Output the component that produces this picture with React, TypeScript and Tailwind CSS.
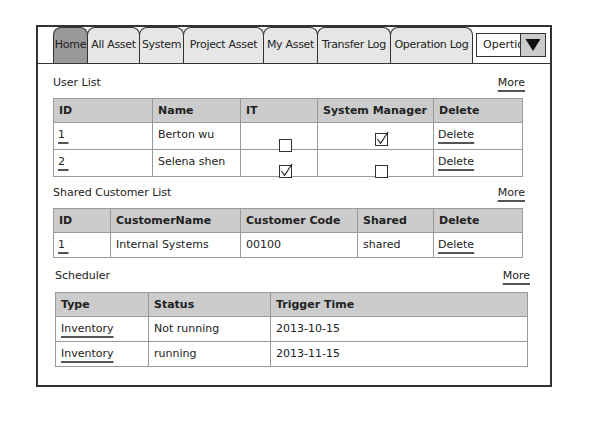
import React from "react";

const tabs = [
  { label: "Home", w: "w-[35px]", active: true },
  { label: "All Asset", w: "w-[53px]" },
  { label: "System", w: "w-[45px]" },
  { label: "Project Asset", w: "w-[81px]" },
  { label: "My Asset", w: "w-[55px]" },
  { label: "Transfer Log", w: "w-[74px]" },
  { label: "Operation Log", w: "w-[83px]" },
];

function Link({ children }: { children: React.ReactNode }) {
  return (
    <span className="underline decoration-[#555] decoration-[1.5px] underline-offset-[4px]">
      {children}
    </span>
  );
}

function Check({ checked }: { checked?: boolean }) {
  return (
    <svg width="15" height="15" viewBox="0 0 15 15" className="overflow-visible">
      <rect x="0.5" y="2.5" width="12" height="12" fill="white" stroke="#333" strokeWidth="1" />
      {checked && <path d="M2.5 8 L5.5 12.5 L13 1" fill="none" stroke="#222" strokeWidth="1.2" />}
    </svg>
  );
}

function SectionHead({ title, className = "" }: { title: string; className?: string }) {
  return (
    <div className={`flex items-center justify-between ${className}`}>
      <span>{title}</span>
      <span className="-mr-[2px]">
        <Link>More</Link>
      </span>
    </div>
  );
}

export default function App() {
  return (
    <div className="w-[613px] h-[443px] bg-white pt-[25px] pl-[36px] font-['DejaVu_Sans',sans-serif] text-[11px] text-[#222]">
      <div className="w-[516px] h-[362px] border-2 border-[#333] flex flex-col">
        {/* tab bar */}
        <div className="flex items-end h-[37px] border-b border-[#333] pl-[15px]">
          {tabs.map((t, i) => (
            <div
              key={t.label}
              className={`${t.w} h-[36px] border border-b-0 border-[#333] rounded-t-[8px] flex items-center justify-center whitespace-nowrap tracking-[-0.3px] ${
                t.active ? "bg-[#999999]" : "bg-[#e6e6e6]"
              } ${i > 0 ? "-ml-px" : ""}`}
            >
              {t.label}
            </div>
          ))}
          <div className="self-start mt-[6px] ml-[3px] w-[70px] h-[24px] border border-[#333] bg-white relative flex items-center pl-[6px] overflow-hidden">
            <span>Opertion</span>
            <div className="absolute right-0 top-0 h-full w-[25px] bg-[#cccccc] border-l border-[#333] flex items-center justify-center">
              <svg width="16" height="14" viewBox="0 0 16 14">
                <path d="M0.5 1 L15.5 1 L8 13 Z" fill="#111" />
              </svg>
            </div>
          </div>
        </div>

        <div className="pl-[15px] pr-[27px] flex flex-col">
          {/* User List */}
          <SectionHead title="User List" className="h-[34px] pt-[4px]" />
          <div className="border border-[#999] grid grid-cols-[99px_88px_77px_116px_1fr]">
            {["ID", "Name", "IT", "System Manager", "Delete"].map((h, i) => (
              <div
                key={h}
                className={`h-[24px] bg-[#cccccc] font-bold px-[5px] flex items-center pt-[1px] border-b border-[#999] ${i < 4 ? "border-r" : ""}`}
              >
                {h}
              </div>
            ))}
            {[
              { id: "1", name: "Berton wu", it: false, sm: true, itPad: "pt-[14px]", smPad: "pt-[8px]", h: "h-[27px] border-b" },
              { id: "2", name: "Selena shen", it: true, sm: false, itPad: "pt-[13px]", smPad: "pt-[13px]", h: "h-[26px]" },
            ].map((r) => (
              <React.Fragment key={r.id}>
                <div className={`${r.h} px-[4px] flex items-center pb-[2px] border-r border-[#999]`}>
                  <Link>{r.id}&nbsp;</Link>
                </div>
                <div className={`${r.h} px-[5px] flex items-center pb-[2px] border-r border-[#999]`}>
                  {r.name}
                </div>
                <div className={`${r.h} pl-[38px] ${r.itPad} border-r border-[#999]`}>
                  <Check checked={r.it} />
                </div>
                <div className={`${r.h} pl-[57px] ${r.smPad} border-r border-[#999]`}>
                  <Check checked={r.sm} />
                </div>
                <div className={`${r.h} px-[4px] flex items-center pb-[2px] border-[#999]`}>
                  <Link>Delete</Link>
                </div>
              </React.Fragment>
            ))}
          </div>

          {/* Shared Customer List */}
          <SectionHead title="Shared Customer List" className="h-[31px] pt-[2px]" />
          <div className="border border-[#999] grid grid-cols-[57px_130px_117px_76px_1fr]">
            {["ID", "CustomerName", "Customer Code", "Shared", "Delete"].map((h, i) => (
              <div
                key={h}
                className={`h-[24px] bg-[#cccccc] font-bold px-[5px] flex items-center pt-[1px] border-b border-[#999] ${i < 4 ? "border-r" : ""}`}
              >
                {h}
              </div>
            ))}
            <div className="h-[24px] px-[4px] flex items-center border-r border-[#999]">
              <Link>1&nbsp;</Link>
            </div>
            <div className="h-[24px] px-[5px] flex items-center border-r border-[#999]">Internal Systems</div>
            <div className="h-[24px] px-[5px] flex items-center border-r border-[#999]">00100</div>
            <div className="h-[24px] px-[5px] flex items-center border-r border-[#999]">shared</div>
            <div className="h-[24px] px-[4px] flex items-center">
              <Link>Delete</Link>
            </div>
          </div>

          {/* Scheduler */}
          <SectionHead title="Scheduler" className="h-[34px] pt-[3px] ml-[2px] -mr-[5px]" />
          <div className="ml-[2px] -mr-[5px] border border-[#999] grid grid-cols-[93px_122px_1fr]">
            {["Type", "Status", "Trigger Time"].map((h, i) => (
              <div
                key={h}
                className={`h-[24px] bg-[#cccccc] font-bold px-[5px] flex items-center pt-[1px] border-b border-[#999] ${i < 2 ? "border-r" : ""}`}
              >
                {h}
              </div>
            ))}
            {[
              { status: "Not running", time: "2013-10-15", h: "h-[25px] border-b" },
              { status: "running", time: "2013-11-15", h: "h-[24px]" },
            ].map((r) => (
              <React.Fragment key={r.time}>
                <div className={`${r.h} px-[5px] flex items-center border-r border-[#999]`}>
                  <Link>Inventory</Link>
                </div>
                <div className={`${r.h} px-[5px] flex items-center border-r border-[#999]`}>
                  {r.status}
                </div>
                <div className={`${r.h} px-[5px] flex items-center border-[#999]`}>
                  {r.time}
                </div>
              </React.Fragment>
            ))}
          </div>
        </div>
      </div>
    </div>
  );
}
